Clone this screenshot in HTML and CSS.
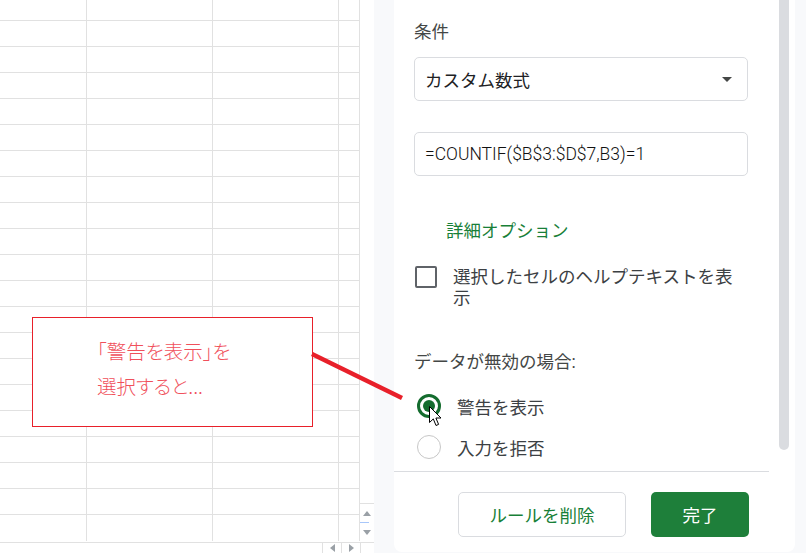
FILE: index.html
```html
<!DOCTYPE html>
<html lang="ja">
<head>
    <meta charset="UTF-8">
    <meta name="viewport" content="width=device-width, initial-scale=1.0">
    <title>データの入力規則</title>
    <link rel="stylesheet" href="styles.css">
</head>
<body>
    <div class="sheet">
        <div class="sheet-main">
            <div class="grid">
                <div class="col col-a"></div>
                <div class="col col-b"></div>
                <div class="col col-c"></div>
                <div class="col col-d"></div>
            </div>
            <div class="vscroll">
                <div class="vscroll-btns">
                    <span class="arrow">
                        <svg width="8" height="5" viewBox="0 0 8 5"><polygon points="0,5 8,5 4,0" fill="#9aa0a6"/></svg>
                    </span>
                    <span class="vscroll-mark"></span>
                    <span class="arrow">
                        <svg width="8" height="5" viewBox="0 0 8 5"><polygon points="0,0 8,0 4,5" fill="#9aa0a6"/></svg>
                    </span>
                </div>
            </div>
        </div>
        <div class="hscroll">
            <span class="hscroll-space"></span>
            <span class="hbtn">
                <svg width="5" height="8" viewBox="0 0 5 8"><polygon points="5,0 5,8 0,4" fill="#9aa0a6"/></svg>
            </span>
            <span class="hbtn">
                <svg width="5" height="8" viewBox="0 0 5 8"><polygon points="0,0 0,8 5,4" fill="#9aa0a6"/></svg>
            </span>
            <span class="hbtn hbtn-end"></span>
        </div>
    </div>

    <div class="panel">
        <div class="card">
            <div class="card-body">
                <div class="form">
                    <div class="label">条件</div>
                    <div class="field select">
                        <span>カスタム数式</span>
                        <svg width="10" height="5" viewBox="0 0 10 5"><polygon points="0,0 10,0 5,5" fill="#444746"/></svg>
                    </div>
                    <div class="field formula">=COUNTIF($B$3:$D$7,B3)=1</div>
                    <div class="link">詳細オプション</div>
                    <div class="check-row">
                        <span class="checkbox"></span>
                        <span class="check-label">選択したセルのヘルプテキストを表示</span>
                    </div>
                    <div class="label label-invalid">データが無効の場合:</div>
                    <div class="radio-row">
                        <span class="radio checked"></span>
                        <span>警告を表示</span>
                    </div>
                    <div class="radio-row radio-row-2">
                        <span class="radio"></span>
                        <span>入力を拒否</span>
                    </div>
                </div>
                <div class="track">
                    <div class="thumb"></div>
                </div>
            </div>
            <div class="card-foot">
                <button class="btn btn-outline">ルールを削除</button>
                <button class="btn btn-primary">完了</button>
            </div>
        </div>
    </div>

    <!-- annotation over the screenshot -->
    <div class="callout">
        <p>「警告を表示」を</p>
        <p>選択すると...</p>
    </div>
    <svg class="pointer-line" width="806" height="553" viewBox="0 0 806 553">
        <line x1="312" y1="354" x2="402" y2="398" stroke="#e8202a" stroke-width="4.5"/>
    </svg>
    <svg class="cursor" width="14" height="21" viewBox="0 0 14 21">
        <path d="M0.5,0.5 L0.5,16.5 L4.3,12.9 L7,19.5 L9.6,18.4 L6.9,12 L12,12 Z" fill="#fff" stroke="#000" stroke-width="1" stroke-linejoin="round"/>
    </svg>
</body>
</html>
```

FILE: styles.css
```css
* {
    box-sizing: border-box;
}
body {
    margin: 0;
    width: 806px;
    height: 553px;
    overflow: hidden;
    display: flex;
    position: relative;
    font-family: Roboto, "Noto Sans CJK JP", sans-serif;
    background-color: #fff;
}

/* spreadsheet */
.sheet {
    width: 374px;
    display: flex;
    flex-direction: column;
    background-color: #fff;
}
.sheet-main {
    height: 542px;
    display: flex;
}
.grid {
    display: grid;
    grid-template-columns: 87px 126px 126px 21px;
    height: 541px;
}
.col {
    border-right: 1px solid #e1e1e1;
    background: repeating-linear-gradient(to bottom, transparent 0 25px, #e1e1e1 25px 26px);
    background-position: 0 -5px;
}
.vscroll {
    width: 14px;
    display: flex;
    flex-direction: column;
    justify-content: flex-end;
}
.vscroll-btns {
    height: 39px;
    border-top: 1px solid #e1e1e1;
    display: flex;
    flex-direction: column;
}
.arrow {
    height: 18px;
    display: flex;
    align-items: center;
    justify-content: center;
}
.vscroll-mark {
    width: 9px;
    height: 1px;
    background-color: #a8c7fa;
}
.hscroll {
    height: 11px;
    border-top: 1px solid #e1e1e1;
    display: flex;
}
.hscroll-space {
    flex: 1;
}
.hbtn {
    width: 19px;
    border-left: 1px solid #e1e1e1;
    display: flex;
    align-items: center;
    justify-content: center;
}
.hbtn-end {
    width: 14px;
}

/* side panel */
.panel {
    flex: 1;
    background-color: #f8f9fb;
    padding: 0 11px 0 20px;
}
.card {
    height: 552px;
    background-color: #fff;
    border-radius: 0 0 8px 8px;
    display: flex;
    flex-direction: column;
    font-size: 17.5px;
    color: #3c4043;
}
.card-body {
    height: 471px;
    display: flex;
}
.form {
    flex: 1;
    padding: 20px 21px 0 20px;
}
.label {
    line-height: 24px;
    color: #444746;
}
.field {
    height: 44px;
    margin-top: 13px;
    border: 1px solid #dadce0;
    border-radius: 5px;
    padding: 0 10px;
    display: flex;
    align-items: center;
    color: #202124;
}
.select {
    justify-content: space-between;
    padding-right: 15px;
}
.formula {
    margin-top: 31px;
    font-weight: 300;
    color: #111;
}
.link {
    margin-top: 43px;
    padding-left: 32px;
    line-height: 24px;
    color: #188038;
}
.check-row {
    margin-top: 23px;
    display: flex;
    align-items: flex-start;
}
.checkbox {
    flex: none;
    width: 22px;
    height: 22px;
    margin-left: 1px;
    border: 2px solid #5f6368;
    border-radius: 2px;
}
.check-label {
    margin: 1px 0 0 16px;
    line-height: 21px;
}
.label-invalid {
    margin-top: 41px;
}
.radio-row {
    margin-top: 20px;
    height: 24px;
    display: flex;
    align-items: center;
    gap: 16px;
    color: #3c4043;
}
.radio-row-2 {
    margin-top: 17px;
}
.radio {
    width: 24px;
    height: 24px;
    margin-left: 3px;
    border: 1.5px solid #c7c7c7;
    border-radius: 50%;
    display: flex;
    align-items: center;
    justify-content: center;
}
.radio.checked {
    border: 3px solid #146c2e;
}
.radio.checked::after {
    content: "";
    width: 12px;
    height: 12px;
    border-radius: 50%;
    background-color: #146c2e;
}
.track {
    width: 26px;
    padding-left: 10px;
}
.thumb {
    width: 10px;
    height: 450px;
    background-color: #dadce0;
    border-radius: 0 0 5px 5px;
}
.card-foot {
    margin-right: 26px;
    border-top: 1px solid #dadce0;
    padding: 20px 20px 0 0;
    display: flex;
    justify-content: flex-end;
    gap: 25px;
}
.btn {
    height: 45px;
    border-radius: 5px;
    font-family: inherit;
    font-size: 17.5px;
    cursor: pointer;
}
.btn-outline {
    width: 168px;
    background-color: #fff;
    border: 1px solid #dadce0;
    color: #188038;
}
.btn-primary {
    width: 98px;
    background-color: #1e7f3a;
    border: none;
    color: #fff;
}

/* annotation overlay */
.callout {
    position: absolute;
    left: 32px;
    top: 317px;
    width: 281px;
    height: 110px;
    background-color: #fff;
    border: 1px solid #e8202a;
    padding: 15px 0 0 64px;
    font-family: "Noto Sans CJK JP", sans-serif;
    font-size: 19.5px;
    font-weight: 300;
    font-feature-settings: "palt";
    color: #f0505b;
}
.callout p {
    margin: 0;
    line-height: 35px;
}
.pointer-line {
    position: absolute;
    left: 0;
    top: 0;
    pointer-events: none;
}
.cursor {
    position: absolute;
    left: 429px;
    top: 406px;
}
```
